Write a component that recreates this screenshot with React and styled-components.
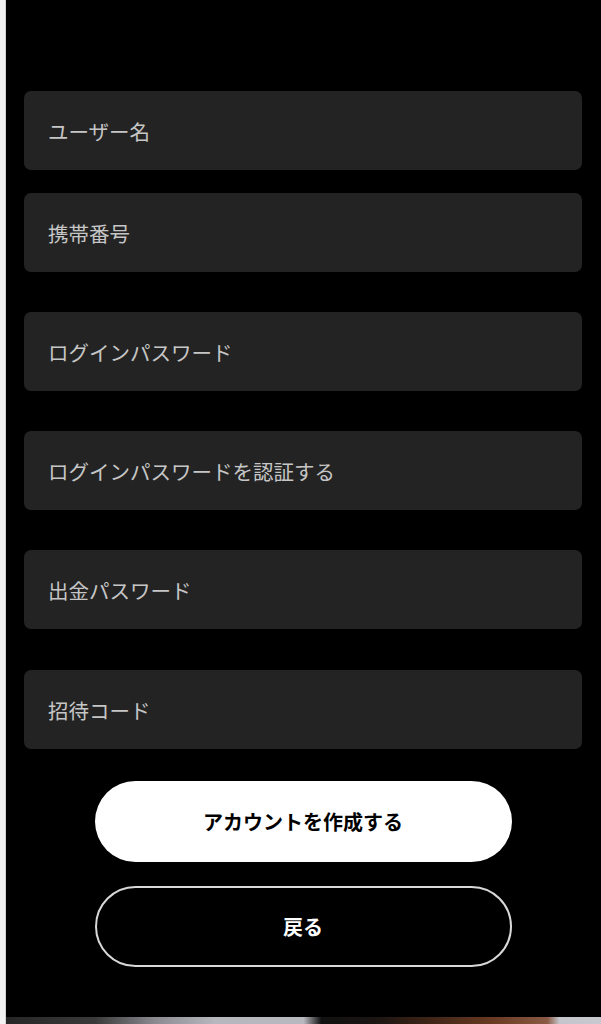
import React from "react";
import styled, { createGlobalStyle } from "styled-components";

const GlobalStyle = createGlobalStyle`
  html, body {
    margin: 0;
    padding: 0;
    background: #f2f2f2;
    font-family: "Noto Sans CJK JP", "Noto Sans", sans-serif;
  }
  * { box-sizing: border-box; }
`;

const fields = [
  { label: "ユーザー名", gap: 23 },
  { label: "携帯番号", gap: 40 },
  { label: "ログインパスワード", type: "password", gap: 40 },
  { label: "ログインパスワードを認証する", type: "password", gap: 40 },
  { label: "出金パスワード", type: "password", gap: 41 },
  { label: "招待コード", gap: 32 },
];

export default function App() {
  return (
    <>
      <GlobalStyle />
      <Page>
        <Side />
        <Main>
          <Form onSubmit={(e) => e.preventDefault()}>
            {fields.map((f) => (
              <Field key={f.label} $gap={f.gap}>
                <Input type={f.type || "text"} placeholder={f.label} />
              </Field>
            ))}
            <Actions>
              <Button type="submit" $primary>
                アカウントを作成する
              </Button>
              <Button type="button">戻る</Button>
            </Actions>
          </Form>
          <Footer />
        </Main>
      </Page>
    </>
  );
}

const Page = styled.div`
  display: flex;
  min-height: 1024px;
`;

const Side = styled.div`
  width: 6px;
  flex-shrink: 0;
  background: #f2f2f2;
  border-right: 1px solid #d2d2d2;
`;

const Main = styled.div`
  flex: 1;
  display: flex;
  flex-direction: column;
  background: #000;
`;

const Form = styled.form`
  flex: 1;
  display: flex;
  flex-direction: column;
  padding: 91px 19px 0 18px;
`;

const Field = styled.div`
  margin-bottom: ${(p) => p.$gap}px;
`;

const Input = styled.input`
  display: block;
  width: 100%;
  height: 79px;
  padding: 0 24px;
  border: none;
  border-radius: 7px;
  background: #232323;
  color: #e6e6e6;
  font-family: inherit;
  font-size: 20.5px;
  outline: none;
  &::placeholder {
    color: #c6c6c6;
  }
`;

const Actions = styled.div`
  display: flex;
  flex-direction: column;
  align-items: center;
  gap: 24px;
`;

const Button = styled.button`
  width: 417px;
  height: 81px;
  border-radius: 41px;
  border: ${(p) => (p.$primary ? "none" : "2px solid #d8d8d8")};
  background: ${(p) => (p.$primary ? "#fff" : "#000")};
  color: ${(p) => (p.$primary ? "#000" : "#fff")};
  font-family: inherit;
  font-size: 20px;
  font-weight: 700;
  cursor: pointer;
`;

const Footer = styled.div`
  height: 7px;
  background: linear-gradient(
    90deg,
    #262626 0%,
    #3a3a3a 15%,
    #8a8a90 25%,
    #b6b6bd 35%,
    #b8b8bf 50%,
    #111 53%,
    #1b1512 62%,
    #3a2216 70%,
    #6a3a22 82%,
    #8a5a44 91%,
    #c4c4cb 93%,
    #c8c8cf 100%
  );
`;
